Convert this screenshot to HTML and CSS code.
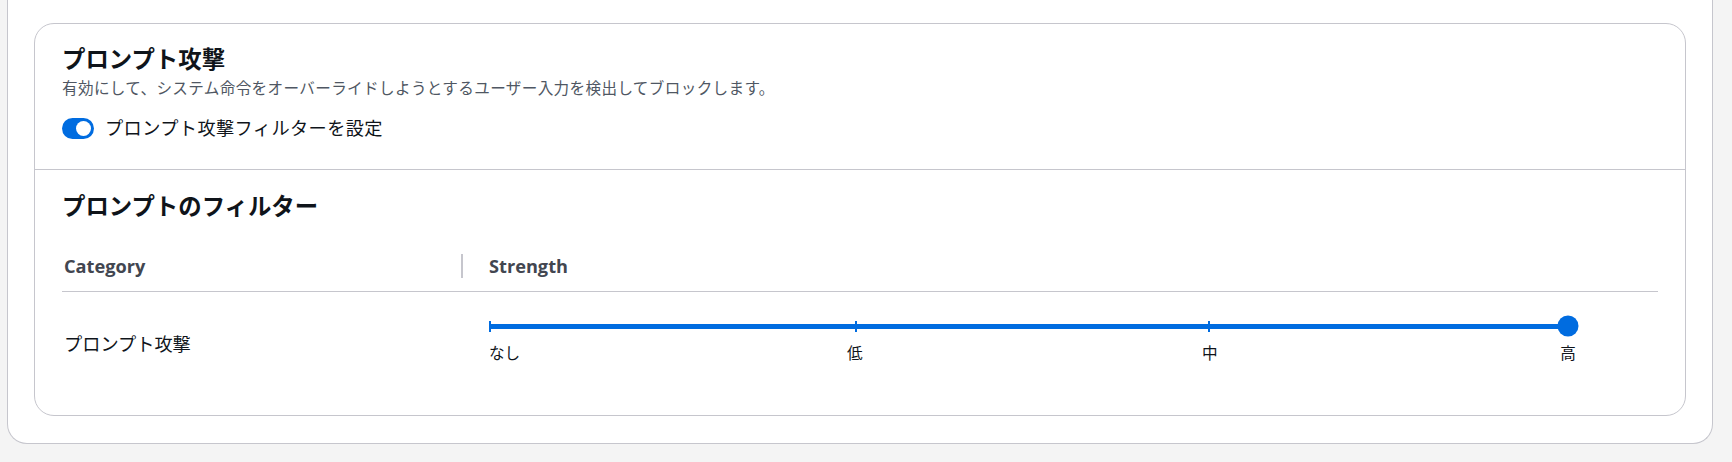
FILE: index.html
```html
<!DOCTYPE html>
<html lang="ja">
<head>
  <meta charset="UTF-8">
  <meta name="viewport" content="width=device-width, initial-scale=1.0">
  <title>プロンプト攻撃</title>
  <link rel="stylesheet" href="styles.css">
</head>
<body>
  <div class="page-card">
    <section class="container">
      <div class="container-header">
        <h2>プロンプト攻撃</h2>
        <p class="description">有効にして、システム命令をオーバーライドしようとするユーザー入力を検出してブロックします。</p>
        <label class="toggle-row">
          <span class="toggle"><span class="toggle-knob"></span></span>
          <span class="toggle-label">プロンプト攻撃フィルターを設定</span>
        </label>
      </div>

      <div class="container-body">
        <h3>プロンプトのフィルター</h3>
        <div class="filter-table">
          <div class="th">Category</div>
          <div class="th th-strength"><span class="col-divider"></span>Strength</div>

          <div class="td td-category">プロンプト攻撃</div>
          <div class="td td-strength">
            <div class="slider">
              <div class="track">
                <span class="tick" style="left: 0%"></span>
                <span class="tick" style="left: 34%"></span>
                <span class="tick" style="left: 66.7%"></span>
                <span class="thumb"></span>
              </div>
            </div>
            <div class="slider-labels">
              <span class="slider-label first">なし</span>
              <span class="slider-label" style="left: 33.9%">低</span>
              <span class="slider-label" style="left: 66.8%">中</span>
              <span class="slider-label" style="left: 100%">高</span>
            </div>
          </div>
        </div>
      </div>
    </section>
  </div>
</body>
</html>
```

FILE: styles.css
```css
/* Base */
* {
  margin: 0;
  padding: 0;
  box-sizing: border-box;
}

body {
  background: #f4f4f4;
  font-family: "Open Sans", "Noto Sans CJK JP", sans-serif;
  font-size: 18.2px;
  line-height: 26px;
  color: #0f141a;
  padding: 0 19px 19px 7px;
  height: 462px;
  overflow: hidden;
}

/* Outer page card (top edge is scrolled off) */
.page-card {
  background: #fff;
  border: 1px solid #c6c6cd;
  border-top: none;
  border-radius: 0 0 20px 20px;
  padding: 23px 26px 27px;
}

/* Inner container */
.container {
  border: 1px solid #c6c6cd;
  border-radius: 20px;
  background: #fff;
}

.container-header {
  padding: 21px 27px 28px;
  border-bottom: 1px solid #c6c6cd;
}

h2,
h3 {
  font-size: 23.4px;
  line-height: 28.6px;
  font-weight: 700;
  color: #0f141a;
}

.description {
  margin-top: 4px;
  font-size: 15.6px;
  line-height: 20.8px;
  letter-spacing: 0.35px;
  color: #4f5763;
}

.toggle-row {
  display: flex;
  align-items: center;
  gap: 11px;
  margin-top: 17px;
  cursor: pointer;
}

.toggle-label {
  letter-spacing: 0.4px;
}

.toggle {
  position: relative;
  width: 32px;
  height: 21px;
  border-radius: 11px;
  background: #006ce0;
  flex-shrink: 0;
}

.toggle-knob {
  position: absolute;
  top: 2.7px;
  right: 2.6px;
  width: 15.6px;
  height: 15.6px;
  border-radius: 50%;
  background: #fff;
}

/* Filter section */
.container-body {
  padding: 22px 27px 27px;
}

.filter-table {
  display: grid;
  grid-template-columns: 399px 1fr;
  margin-top: 24px;
}

.th {
  padding: 8px 0 12px 2px;
  font-weight: 700;
  color: #424650;
  border-bottom: 1px solid #c6c6cd;
}

.th-strength {
  display: flex;
  align-items: center;
  gap: 26px;
  padding-left: 0;
}

.col-divider {
  width: 2px;
  height: 24px;
  background: #c6c6cd;
}

.td {
  padding-bottom: 24px;
}

.td-category {
  padding-top: 39px;
  padding-left: 2px;
}

.td-strength {
  padding-top: 24px;
  padding-left: 28px;
}

/* Slider */
.slider {
  width: 1079px;
  height: 21px;
  display: flex;
  align-items: center;
}

.track {
  position: relative;
  width: 100%;
  height: 5px;
  background: #006ce0;
  border-radius: 1px;
}

.tick {
  position: absolute;
  top: -3px;
  width: 2px;
  height: 11px;
  margin-left: -1px;
  background: #006ce0;
}

.tick:first-child {
  margin-left: 0;
}

.thumb {
  position: absolute;
  left: 100%;
  top: 50%;
  width: 21px;
  height: 21px;
  border-radius: 50%;
  background: #006ce0;
  transform: translate(-50%, -50%);
}

.slider-labels {
  position: relative;
  width: 1079px;
  height: 20.8px;
  margin-top: 6px;
  font-size: 15.6px;
  line-height: 20.8px;
  color: #0f141a;
}

.slider-label {
  position: absolute;
  top: 0;
  transform: translateX(-50%);
  white-space: nowrap;
}

.slider-label.first {
  left: 0;
  transform: none;
}
```
